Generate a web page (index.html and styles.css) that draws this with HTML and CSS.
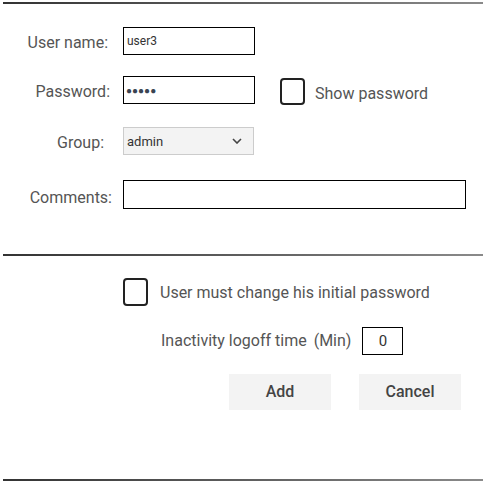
FILE: index.html
```html
<!DOCTYPE html>
<html>
<head>
<meta charset="utf-8">
<link rel="stylesheet" href="styles.css">
</head>
<body>
<div class="rule rule-top"></div>
<div class="fields">
  <div class="row row-1">
    <label class="lbl lbl-user">User name:</label>
    <div class="box input">user3</div>
  </div>
  <div class="row row-2">
    <label class="lbl lbl-pass">Password:</label>
    <div class="box input dots">●●●●●</div>
    <span class="check check-show"></span>
    <span class="check-text show-text">Show password</span>
  </div>
  <div class="row row-3">
    <label class="lbl lbl-group">Group:</label>
    <div class="box select">
      <span>admin</span>
      <svg class="chev" width="10" height="6" viewBox="0 0 10 6"><path d="M1 1 L5 5 L9 1" fill="none" stroke="#444" stroke-width="1.6"/></svg>
    </div>
  </div>
  <div class="row row-4">
    <label class="lbl lbl-comm">Comments:</label>
    <div class="box input wide"></div>
  </div>
</div>
<div class="rule rule-mid"></div>
<div class="options">
  <div class="opt-row">
    <span class="check"></span>
    <span class="check-text">User must change his initial password</span>
  </div>
  <div class="inact-row">
    <span class="inact-text">Inactivity logoff time</span>
    <span class="inact-unit">(Min)</span>
    <div class="box num">0</div>
  </div>
  <div class="btn-row">
    <button class="btn">Add</button>
    <button class="btn">Cancel</button>
  </div>
</div>
<div class="rule rule-bottom"></div>
</body>
</html>
```
FILE: styles.css
```css
html, body {
  margin: 0;
  padding: 0;
  background: #fff;
}
body {
  font-family: Roboto, "Liberation Sans", sans-serif;
  color: #555;
  width: 489px;
  height: 485px;
  overflow: hidden;
}
.rule {
  height: 2px;
  width: 480px;
  margin-left: 3px;
  background: linear-gradient(to right, #333, #8a8a8a);
}
.rule-top { margin-top: 2px; }
.rule-mid { margin-top: 45px; }
.rule-bottom { margin-top: 69px; }

.fields { padding-top: 23px; }
.row {
  display: flex;
  align-items: center;
  height: 28px;
}
.row-2 { margin-top: 21px; }
.row-3 { margin-top: 23px; }
.row-4 { margin-top: 25px; height: 29px; }
.lbl {
  width: 123px;
  box-sizing: border-box;
  text-align: right;
  font-size: 16px;
  color: #555;
  flex: none;
  padding-top: 3px;
}
.lbl-user { padding-right: 15px; }
.lbl-pass { padding-right: 13px; }
.lbl-group { padding-right: 19px; }
.lbl-comm { padding-right: 11px; padding-top: 5px; }

.box {
  box-sizing: border-box;
  height: 100%;
  border: 1px solid #000;
  display: flex;
  align-items: center;
  flex: none;
}
.input {
  width: 132px;
  padding-left: 3px;
  font-size: 12px;
  color: #333;
}
.dots {
  font-size: 10px;
  letter-spacing: 0px;
  color: #3a4452;
  padding-left: 2px;
}
.wide { width: 343px; }
.select {
  width: 131px;
  border-color: #ccc;
  background: #f3f3f3;
  padding: 0 11px 0 3px;
  justify-content: space-between;
  font-size: 13px;
  color: #333;
}
.chev { display: block; }

.check {
  display: block;
  box-sizing: border-box;
  width: 25px;
  height: 27px;
  border: 2px solid #222;
  border-radius: 4px;
  flex: none;
}
.check-show { margin-left: 25px; margin-top: 3px; }
.check-text {
  font-size: 16px;
  color: #555;
  margin-left: 10px;
}
.show-text { padding-top: 7px; }

.options { padding-top: 22px; }
.opt-row {
  display: flex;
  align-items: center;
  padding-left: 123px;
}
.opt-row .check { width: 25px; height: 28px; }
.opt-row .check-text { margin-left: 12px; }

.inact-row {
  display: flex;
  align-items: center;
  height: 28px;
  margin-top: 21px;
  padding-left: 161px;
  font-size: 16px;
  color: #555;
}
.inact-unit { margin-left: 7px; }
.inact-text, .inact-unit { padding-bottom: 1px; }
.num {
  width: 41px;
  margin-left: 11px;
  justify-content: center;
  font-size: 15px;
  color: #333;
}

.btn-row {
  display: flex;
  gap: 28px;
  padding-left: 229px;
  margin-top: 19px;
}
.btn {
  width: 102px;
  height: 36px;
  border: none;
  background: #f3f3f3;
  font-family: Roboto, "Liberation Sans", sans-serif;
  font-size: 16px;
  font-weight: 500;
  color: #444;
  padding: 0 0 2px 0;
}
```
